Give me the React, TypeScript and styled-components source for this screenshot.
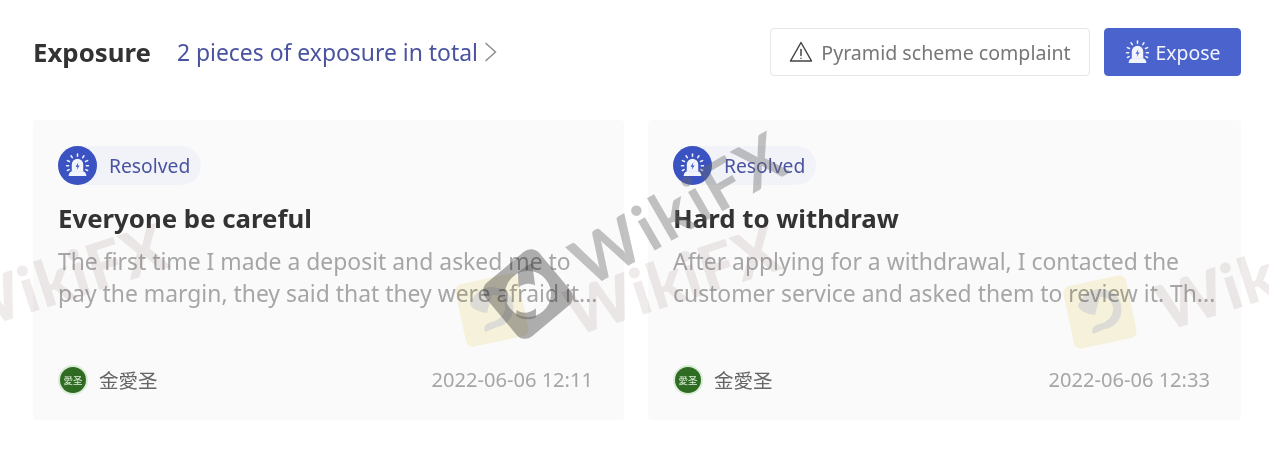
import React from "react";
import styled, { createGlobalStyle } from "styled-components";

const Global = createGlobalStyle`
  html, body { margin: 0; padding: 0; background: #fff; }
  body { font-family: "Noto Sans", "Noto Sans CJK SC", sans-serif; overflow: hidden; }
`;

const Page = styled.div`
  position: relative;
  width: 1269px;
  height: 470px;
  padding: 28px 28px 0 33px;
  box-sizing: border-box;
  overflow: hidden;
`;

const Header = styled.header`
  display: flex;
  align-items: center;
  height: 48px;
`;

const Title = styled.h2`
  margin: 0 26px 0 0;
  font-size: 25.8px;
  font-weight: 700;
  line-height: 48px;
  color: #333;
`;

const TotalLink = styled.a`
  display: flex;
  align-items: center;
  gap: 6px;
  font-size: 22.9px;
  color: #4a539f;
`;

const Actions = styled.div`
  margin-left: auto;
  display: flex;
  gap: 14px;
`;

const Button = styled.button<{ $primary?: boolean }>`
  display: flex;
  align-items: center;
  justify-content: center;
  gap: ${(p) => (p.$primary ? "6px" : "8px")};
  height: 48px;
  margin: 0;
  padding: 0;
  width: ${(p) => (p.$primary ? "137px" : "320px")};
  border: 1px solid ${(p) => (p.$primary ? "#4b63cd" : "#e6e6e6")};
  border-radius: 4px;
  background: ${(p) => (p.$primary ? "#4b63cd" : "#fff")};
  color: ${(p) => (p.$primary ? "#f2f4fd" : "#777")};
  font-family: inherit;
  font-size: ${(p) => (p.$primary ? "19.4px" : "19.6px")};
`;

const Cards = styled.div`
  display: grid;
  grid-template-columns: 591px 593px;
  gap: 24px;
  margin-top: 44px;
`;

const Card = styled.article`
  height: 300px;
  box-sizing: border-box;
  padding: 26px 21px 0 25px;
  background: #fafafa;
  border-radius: 4px;
  display: flex;
  flex-direction: column;
`;

const Status = styled.div`
  display: flex;
  align-items: center;
  align-self: flex-start;
  height: 39px;
  padding-right: 11px;
  border-radius: 20px;
  background: #f2f3f8;
  color: #4a539f;
  font-size: 19.3px;
  gap: 12px;
`;

const StatusIcon = styled.span`
  width: 39px;
  height: 39px;
  border-radius: 50%;
  background: #3a52c2;
  display: flex;
  align-items: center;
  justify-content: center;
`;

const CardTitle = styled.h3`
  margin: 13px 0 0;
  font-size: 25.8px;
  line-height: 40px;
  font-weight: 700;
  color: #333;
`;

const Body = styled.p`
  margin: 8px 0 0;
  font-size: 22.9px;
  line-height: 32px;
  height: 64px;
  color: #a6a6a6;
`;

const Footer = styled.div`
  margin: auto 10px 26px 0;
  display: flex;
  align-items: center;
`;

const Avatar = styled.span`
  width: 26px;
  height: 26px;
  margin: 0 13px 0 2px;
  border-radius: 50%;
  background: #2f6b22;
  box-shadow: 0 0 0 2px #d9ecd6;
  color: #dfeedd;
  font-size: 9.500px;
  display: flex;
  align-items: center;
  justify-content: center;
  white-space: nowrap;
  font-family: "Noto Sans CJK SC", sans-serif;
`;

const Author = styled.span`
  font-size: 19.5px;
  color: #666;
  font-family: "Noto Sans CJK SC", sans-serif;
`;

const Time = styled.time`
  margin-left: auto;
  font-size: 20.1px;
  color: #a6a6a6;
`;

const Mark = styled.div<{ $x: number; $y: number; $r: number; $size: number; $dark?: boolean }>`
  position: absolute;
  left: ${(p) => p.$x}px;
  top: ${(p) => p.$y}px;
  transform: rotate(${(p) => p.$r}deg);
  transform-origin: left center;
  font-family: Lato, sans-serif;
  font-weight: ${(p) => (p.$dark ? 700 : 900)};
  font-size: ${(p) => p.$size}px;
  line-height: 1;
  letter-spacing: ${(p) => (p.$dark ? "3px" : "1px")};
  white-space: nowrap;
  color: ${(p) => (p.$dark ? "rgba(105,105,105,.4)" : "rgba(120,100,90,.13)")};
  pointer-events: none;
`;

const LogoSpot = styled.svg<{ $x: number; $y: number }>`
  position: absolute;
  left: ${(p) => p.$x}px;
  top: ${(p) => p.$y}px;
  pointer-events: none;
  mix-blend-mode: multiply;
`;

const Siren = ({ size = 24, bolt = "#3a52c2" }: { size?: number; bolt?: string }) => (
  <svg width={size} height={size} viewBox="0 0 24 24" fill="none">
    <path d="M6.500 18V11a5.500 5.500 0 0 1 11 0v7z" fill="#f2f4fd" />
    <path d="M3.500 22c0-2.900 1.700-4.500 4-4.500h9c2.300 0 4 1.600 4 4.500z" fill="#f2f4fd" />
    <path d="M12.900 8.800 10.100 13.300h1.900l-.9 3.100 2.900-4.500h-1.900z" fill={bolt} />
    <path
      d="M12 1v2M5.800 2.700l1.200 1.700M18.200 2.700l-1.200 1.700M2.300 7.300l2 .8M21.700 7.300l-2 .8M1.500 12.200h2M20.500 12.200h2M2.300 16.800l1.700-.8M21.700 16.800l-1.700-.8"
      stroke="#f2f4fd"
      strokeWidth="1.500"
      strokeLinecap="round"
    />
  </svg>
);

const Warning = () => (
  <svg width="24" height="24" viewBox="0 0 24 24" fill="none" stroke="#444" strokeWidth="1.500" strokeLinejoin="round" strokeLinecap="round">
    <path d="M12 2.500 1.500 21h21z" />
    <path d="M12 9.500v6" />
    <path d="M12 18.200v.1" />
  </svg>
);

const Chevron = () => (
  <svg width="13" height="22" viewBox="0 0 13 22" fill="none" stroke="#8a8a8a" strokeWidth="1.400">
    <path d="M1.500 2 11.500 11 1.500 20" />
  </svg>
);

const YellowLogo = ({ x, y }: { x: number; y: number }) => (
  <LogoSpot $x={x} $y={y} width="84" height="84" viewBox="0 0 84 84">
    <rect x="10" y="10" width="64" height="64" rx="7" fill="#fbf6e0" transform="rotate(-12 42 42)" />
    <path
      d="M20 36c4-13 17-20 29-16 11 3 16 13 14 24-2 8-8 14-16 15l-12 5c-2-5 0-8 6-10 7-1 14-7 14-14 1-8-6-14-13-13l-5 18c-8-1-15-4-17-9z"
      fill="#e2e0da"
    />
  </LogoSpot>
);

const DarkLogo = () => (
  <LogoSpot $x={473} $y={239} width="110" height="110" viewBox="0 0 110 110">
    <g transform="rotate(-40 55 55)" fill="rgba(105,105,105,.52)">
      <path
        fillRule="evenodd"
        d="M31 20h48a11 11 0 0 1 11 11v48a11 11 0 0 1-11 11H31a11 11 0 0 1-11-11V31a11 11 0 0 1 11-11zM55 32a23 23 0 1 0 0 46 23 23 0 0 0 0-46z"
      />
      <path d="M78 34 66 53c-3-6-8-9-14-9l9-12c7 0 12 0 17 2z" />
      <path d="M36 60c2 7 8 11 16 11l-6 7c-7-2-12-7-14-14z" />
    </g>
  </LogoSpot>
);

const items = [
  {
    title: "Everyone be careful",
    body: "The first time I made a deposit and asked me to pay the margin, they said that they were afraid it...",
    time: "2022-06-06 12:11",
  },
  {
    title: "Hard to withdraw",
    body: "After applying for a withdrawal, I contacted the customer service and asked them to review it. Th...",
    time: "2022-06-06 12:33",
  },
];

export default function App() {
  return (
    <Page>
      <Global />
      <Header>
        <Title>Exposure</Title>
        <TotalLink>
          2 pieces of exposure in total
          <Chevron />
        </TotalLink>
        <Actions>
          <Button>
            <Warning />
            Pyramid scheme complaint
          </Button>
          <Button $primary>
            <Siren size={25} bolt="#4b63cd" />
            Expose
          </Button>
        </Actions>
      </Header>
      <Cards>
        {items.map((it) => (
          <Card key={it.title}>
            <Status>
              <StatusIcon>
                <Siren size={25} />
              </StatusIcon>
              Resolved
            </Status>
            <CardTitle>{it.title}</CardTitle>
            <Body>{it.body}</Body>
            <Footer>
              <Avatar>愛圣</Avatar>
              <Author>金愛圣</Author>
              <Time>{it.time}</Time>
            </Footer>
          </Card>
        ))}
      </Cards>
      <YellowLogo x={450} y={268} />
      <YellowLogo x={1058} y={270} />
      <Mark $x={-45} $y={280} $r={-18} $size={64}>WikiFX</Mark>
      <Mark $x={567} $y={282} $r={-18} $size={64}>WikiFX</Mark>
      <Mark $x={1158} $y={277} $r={-18} $size={64}>WikiFX</Mark>
      <DarkLogo />
      <Mark $x={576} $y={234} $r={-30} $size={66} $dark>WikiFX</Mark>
    </Page>
  );
}
